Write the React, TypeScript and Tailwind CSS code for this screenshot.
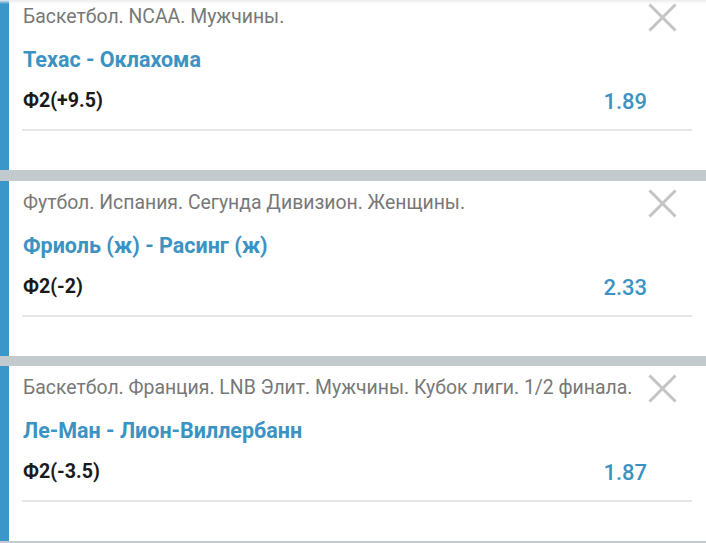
import React from "react";

type Bet = { category: string; teams: string; market: string; odds: string };

const bets: Bet[] = [
  { category: "Баскетбол. NCAA. Мужчины.", teams: "Техас - Оклахома", market: "Ф2(+9.5)", odds: "1.89" },
  { category: "Футбол. Испания. Сегунда Дивизион. Женщины.", teams: "Фриоль (ж) - Расинг (ж)", market: "Ф2(-2)", odds: "2.33" },
  { category: "Баскетбол. Франция. LNB Элит. Мужчины. Кубок лиги. 1/2 финала.", teams: "Ле-Ман - Лион-Виллербанн", market: "Ф2(-3.5)", odds: "1.87" },
];

function CloseIcon() {
  return (
    <svg width="29" height="29" viewBox="0 0 29 29" className="shrink-0 mr-[15px]">
      <path d="M1.5 1.5 L27.5 27.5 M27.5 1.5 L1.5 27.5" stroke="#c4c4c4" strokeWidth="3" fill="none" />
    </svg>
  );
}

function Card({ bet }: { bet: Bet }) {
  return (
    <div className="bg-white border-l-[9px] border-[#3b97c9] h-[175px] pl-[13px] pr-[14px] flex flex-col shrink-0 first:-mt-[5px]">
      <div className="flex items-start justify-between pt-[8px]">
        <div className="flex-1 pl-[1px] text-[19.4px] leading-[28px] text-[#787878] whitespace-nowrap">{bet.category}</div>
        <CloseIcon />
      </div>
      <div className="mt-[14px] pl-[1px] text-[21.5px] leading-[28px] font-bold text-[#3b93c3]">{bet.teams}</div>
      <div className="mt-[13px] flex items-center justify-between pl-[1px] pr-[45px]">
        <span className="text-[19.6px] leading-[28px] font-bold text-[#1a1a1a]">{bet.market}</span>
        <span className="text-[22px] leading-[28px] font-medium text-[#3b93c3] translate-y-[1px]">{bet.odds}</span>
      </div>
      <div className="mt-[14px] h-[2px] bg-[#e6e6e6]" />
    </div>
  );
}

export default function App() {
  return (
    <div
      className="relative w-[706px] h-[543px] overflow-hidden bg-[#c3cacd] flex flex-col gap-[10.5px]"
      style={{ fontFamily: "Roboto, 'Noto Sans', sans-serif" }}
    >
      {bets.map((b, i) => (
        <Card key={i} bet={b} />
      ))}
      <div className="absolute top-0 left-0 right-0 h-[4px] bg-gradient-to-b from-[#ececec] to-transparent" />
    </div>
  );
}
